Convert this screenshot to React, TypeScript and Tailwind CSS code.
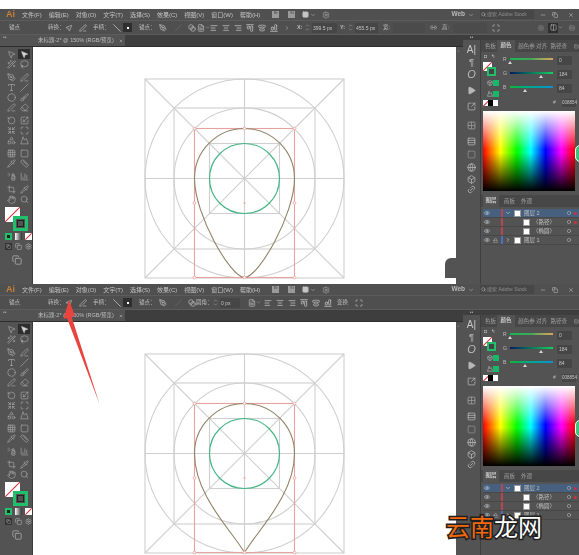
import React from "react";
import {
  Play, Link2, Box, Globe, Rows3, Square, SquareArrowOutUpRight, Grid2x2, Eye, Lock, ChevronDown, ChevronRight, Circle,
  MousePointer2, Wand2, Lasso, PenTool, PenLine, Type, Slash, Brush, Eraser, RotateCcw, Scaling, Shrink, Maximize, Shapes, Mountain, Grid3x3, Blend, Pipette, Ruler, SprayCan, ChartColumn, Crop, Hand, Search, Copy, Minus, X, AlignLeft, AlignCenter, AlignRight, AlignStartVertical, AlignCenterVertical, AlignEndVertical, FileText, Settings, Columns2,
} from "lucide-react";

const ink = "text-[#bdbdbd]";

function Spin({ v, cls }: { v: string; cls: string }) {
  return (
    <div className={`flex items-center ${cls}`}>
      <div className="flex flex-col text-[#bdbdbd] w-[5px] mr-[2px]">
        <ChevronDown size={5} strokeWidth={2} className="rotate-180 -mb-[1px]" />
        <ChevronDown size={5} strokeWidth={2} />
      </div>
      <div className="flex-1 h-[10px] bg-[#464646] text-[5px] leading-[10px] pl-[1px] text-[#c4c4c4] overflow-hidden whitespace-nowrap">{v}</div>
    </div>
  );
}

function MenuBar() {
  const items = ["文件(F)", "编辑(E)", "对象(O)", "文字(T)", "选择(S)", "效果(C)", "视图(V)", "窗口(W)", "帮助(H)"];
  return (
    <div className="h-[11px] bg-[#505050] flex items-center text-[6px] leading-none text-[#c4c4c4] whitespace-nowrap">
      <span className="ml-[6px] w-[16px] text-[9px] font-bold text-[#c8803a]">Ai</span>
      <div className="flex gap-[7px]">
        {items.map((t) => (
          <span key={t}>{t}</span>
        ))}
      </div>
      <div className="ml-[12px] w-[7px] h-[7px] bg-[#9a9a9a] text-[4px] text-[#444] text-center">Br</div>
      <div className="ml-[9px] w-[7px] h-[7px] bg-[#9a9a9a] text-[4px] text-[#444] text-center">St</div>
      <Grid2x2 size={7} className="ml-[7px] text-[#c5c5c5]" fill="#c5c5c5" />
      <ChevronDown size={6} className="ml-[1px] text-[#bbb]" />
      <Settings size={8} className="ml-[6px] text-[#a5a5a5]" />
      <div className="flex-1" />
      <span className="font-bold text-[6.5px] text-[#b8b8b8]">Web</span>
      <ChevronDown size={6} className="ml-[3px] text-[#bbb]" />
      <div className="ml-[6px] w-[54px] h-[9px] bg-[#474747] text-[5px] leading-[9px] pl-[1px] text-[#8f8f8f]">
        <Search size={5} className="inline text-[#ccc] mr-[1px]" />搜索 Adobe Stock
      </div>
      <Minus size={6} className="ml-[6px] text-[#c5c5c5]" />
      <Copy size={6} className="ml-[6px] text-[#c5c5c5]" />
      <X size={6} className="ml-[10px] mr-[5px] text-[#c5c5c5]" />
    </div>
  );
}

function AlignSet() {
  return (
    <>
      <AlignLeft size={8} strokeWidth={2.4} />
      <AlignCenter size={8} strokeWidth={2.4} />
      <AlignRight size={8} strokeWidth={2.4} />
      <AlignStartVertical size={8} strokeWidth={2.4} className="rotate-90" />
      <AlignCenterVertical size={8} strokeWidth={2.4} />
      <AlignEndVertical size={8} strokeWidth={2.4} className="rotate-90" />
    </>
  );
}

function CommonLeft() {
  return (
    <>
      <span className="ml-[9px] w-[39px]">锚点</span>
      <span className="w-[16px]">转换：</span>
      <MousePointer2 size={8} className="ml-[1px] -scale-x-100" />
      <PenLine size={8} className="ml-[6px]" />
      <span className="ml-[6px] w-[17px]">手柄：</span>
      <Slash size={8} className="ml-[3px] -scale-x-100" strokeWidth={2.4} />
      <div className="ml-[2px] w-[9px] h-[9px] bg-[#2f2f2f] flex items-center justify-center">
        <div className="w-[2px] h-[2px] bg-white" />
      </div>
      <span className="ml-[7px] w-[15px]">锚点：</span>
      <PenTool size={8} className="ml-[5px]" />
      <Slash size={7} className="ml-[8px] opacity-30" />
      <Blend size={8} className="ml-[6px]" />
    </>
  );
}

function OptionsTop() {
  return (
    <div className={`h-[15px] bg-[#4f4f4f] border-y border-[#5c5c5c] flex items-center text-[5.5px] leading-none whitespace-nowrap ${ink}`}>
      <CommonLeft />
      <FileText size={8} className="ml-[1px]" />
      <ChevronDown size={5} />
      <div className="flex gap-[4px] items-center"><AlignSet /></div>
      <ChevronRight size={6} className="ml-[6px]" />
      <span className="ml-[7px] w-[5px] font-bold">X:</span>
      <Spin v="399.5 px" cls="ml-[3px] w-[32px]" />
      <span className="ml-[3px] w-[5px] font-bold">Y:</span>
      <Spin v="455.5 px" cls="ml-[3px] w-[30px]" />
      <span className="ml-[5px] w-[9px]">宽:</span>
      <div className="ml-[1px] w-[32px] h-[10px] bg-[#4b4b4b]" />
      <Link2 size={7} className="ml-[5px]" />
      <span className="ml-[5px] w-[8px]">高:</span>
      <div className="ml-[3px] w-[34px] h-[10px] bg-[#4b4b4b]" />
      <Maximize size={8} className="ml-[5px]" />
      <Grid3x3 size={6} className="ml-[38px] opacity-40" />
      <div className="ml-[4px] w-[10px] h-[10px] bg-[#2f2f2f] flex items-center justify-center">
        <Columns2 size={7} />
      </div>
      <ChevronDown size={5} />
      <Rows3 size={6} className="ml-[6px] opacity-60" />
    </div>
  );
}

function OptionsBottom() {
  return (
    <div className={`h-[15px] bg-[#4f4f4f] border-y border-[#5c5c5c] flex items-center text-[5.5px] leading-none whitespace-nowrap ${ink}`}>
      <CommonLeft />
      <span className="w-[17px]">圆角：</span>
      <Spin v="0 px" cls="w-[27px]" />
      <FileText size={8} className="ml-[8px]" />
      <ChevronDown size={5} className="mr-[3px]" />
      <div className="flex gap-[4px] items-center"><AlignSet /></div>
      <span className="ml-[5px] w-[11px]">变换</span>
      <Maximize size={8} className="ml-[7px]" />
    </div>
  );
}

function TabBar() {
  return (
    <div className="h-[12px] bg-[#3e3e3e] flex text-[5.5px] leading-[11px] text-[#bdbdbd] border-b border-[#2e2e2e] whitespace-nowrap">
      <div className="w-[33px] bg-[#535353] text-[#aaa] pl-[3px] leading-[5px] text-[5px]">••</div>
      <div className="w-[92px] bg-[#535353] pl-[5px] flex items-center">
        未标题-2* @ 150% (RGB/预览)
        <X size={4} className="ml-[5px]" strokeWidth={3} />
      </div>
    </div>
  );
}

function Tool({ I, fill, dark }: { I: React.ComponentType<any>; fill?: boolean; dark?: boolean }) {
  return (
    <div className={`w-[12px] h-[10px] flex items-center justify-center ${dark ? "bg-[#2e2e2e]" : ""}`}>
      <I size={9} strokeWidth={1.5} className="text-[#b4b4b4]" fill={fill ? "#d8d8d8" : "none"} />
    </div>
  );
}

function Toolbox() {
  const groups: [React.ComponentType<any>, React.ComponentType<any>][][] = [
    [[MousePointer2, MousePointer2], [Wand2, Lasso]],
    [[PenTool, PenLine], [Type, Slash], [Circle, Brush], [PenLine, Eraser]],
    [[RotateCcw, Scaling], [Shrink, Maximize], [Shapes, Mountain]],
    [[Grid3x3, Square], [Pipette, Ruler]],
    [[SprayCan, ChartColumn]],
    [[Crop, Pipette], [Hand, Search]],
  ];
  return (
    <div className="w-[33px] h-full bg-[#535353] border-r border-[#3a3a3a] pl-[5px] pt-[2px] shrink-0">
      {groups.map((g, i) => (
        <div key={i} className="mb-[3px]">
          {g.map(([A, B], j) => (
            <div key={j} className="flex gap-[1px]">
              <Tool I={A} />
              <Tool I={B} fill={i === 0 && j === 0} dark={i === 0 && j === 0} />
            </div>
          ))}
        </div>
      ))}
      <div className="relative h-[25px] mt-[1px]">
        <div className="absolute left-0 top-0 w-[15px] h-[15px] bg-white overflow-hidden">
          <div className="absolute left-[-3px] top-[7px] w-[21px] h-[1px] bg-[#d8303a] -rotate-45" />
        </div>
        <div className="absolute left-[8px] top-[9px] w-[15px] h-[15px] border-[3px] border-[#1fbf6c] bg-[#535353] flex items-center justify-center">
          <div className="w-[7px] h-[7px] border border-[#222]" />
        </div>
      </div>
      <div className="flex gap-[3px] mt-[1px]">
        <div className="w-[7px] h-[7px] border-2 border-[#1fbf6c] bg-[#222]" />
        <div className="w-[7px] h-[7px] bg-gradient-to-r from-white to-[#333]" />
        <div className="w-[7px] h-[7px] bg-white relative overflow-hidden">
          <div className="absolute left-[-1px] top-[3px] w-[9px] h-[1px] bg-[#d8303a] -rotate-45" />
        </div>
      </div>
      <div className="flex gap-[3px] mt-[3px] text-[#b4b4b4]">
        <div className="w-[7px] h-[7px] bg-[#333] flex items-center justify-center"><Copy size={5} /></div>
        <Copy size={7} />
        <Settings size={7} />
      </div>
      <Copy size={10} className="ml-[7px] mt-[5px] text-[#aaa]" />
    </div>
  );
}

function CanvasArt({ pointed }: { pointed?: boolean }) {
  const cx = 211.5;
  const cy = 131.5;
  const bottom = cy + 99;
  const lower = pointed
    ? `C${cx + 50},${cy + 42} ${cx + 12},${cy + 78} ${cx},${bottom}C${cx - 12},${cy + 78} ${cx - 50},${cy + 42} ${cx - 50},${cy}`
    : `C${cx + 50},${cy + 36} ${cx + 14},${bottom} ${cx},${bottom}C${cx - 14},${bottom} ${cx - 50},${cy + 36} ${cx - 50},${cy}`;
  const handles: [number, number][] = [
    [cx - 50, cy - 50], [cx, cy - 50], [cx + 50, cy - 50],
    [cx - 50, cy + 24.5], [cx + 50, cy + 24.5],
    [cx - 50, bottom], [cx, bottom], [cx + 50, bottom],
  ];
  return (
    <svg width="423" height="237" viewBox="0 0 423 237" className="block" fill="none">
      <g stroke="#cfcfcf" strokeWidth="1.1">
        <rect x={cx - 99.5} y={cy - 99.5} width="199" height="199" />
        <rect x={cx - 70.5} y={cy - 70.5} width="141" height="141" />
        <rect x={cx - 35} y={cy - 35} width="70" height="70" />
        <circle cx={cx} cy={cy} r="99.5" />
        <circle cx={cx} cy={cy} r="70.5" />
        <path d={`M${cx - 99.5},${cy - 99.5}L${cx + 99.5},${cy + 99.5}M${cx + 99.5},${cy - 99.5}L${cx - 99.5},${cy + 99.5}M${cx - 99.5},${cy}H${cx + 99.5}M${cx},${cy - 99.5}V${cy + 99.5}`} />
      </g>
      <circle cx={cx} cy={cy} r="35" stroke="#43b583" strokeWidth="1.2" />
      <rect x={cx - 50} y={cy - 50} width="100" height="149" stroke="#e9a0a0" strokeWidth="1.1" />
      <path d={`M${cx - 50},${cy}A50,50 0 0 1 ${cx + 50},${cy}${lower}`} stroke="#8f8468" strokeWidth="1.1" />
      {handles.map(([x, y]) => (
        <circle key={`${x}-${y}`} cx={x} cy={y} r="1.4" fill="#fff" stroke="#ee9a9a" strokeWidth="0.8" />
      ))}
      <circle cx={cx} cy={cy + 24.5} r="1" fill="#f0a5a5" />
    </svg>
  );
}

function DockIcons() {
  const s = "text-[#b8b8b8]";
  return (
    <div className="w-[18px] shrink-0 border-r border-[#3f3f3f] bg-[#535353] flex flex-col items-center">
      <div className="w-full h-[5px] bg-[#3e3e3e] text-[#aaa] text-[5px] leading-[4px] text-center">••</div>
      <span className="mt-[4px] text-[10px] leading-[12px] text-[#c8c8c8]">A|</span>
      <span className="text-[9px] leading-[12px] text-[#aaa] font-bold">¶</span>
      <span className="text-[11px] leading-[12px] text-[#bbb] italic">O</span>
      <Play size={9} fill="#b8b8b8" className={`${s} mt-[6px]`} />
      <SquareArrowOutUpRight size={9} className={`${s} mt-[7px]`} />
      <Grid2x2 size={9} className={`${s} mt-[10px] opacity-70`} strokeDasharray="2 1" />
      <Rows3 size={9} className={`${s} mt-[7px]`} />
      <Square size={9} className={`${s} mt-[4px] opacity-60`} />
      <Globe size={9} className={`${s} mt-[4px]`} />
      <Box size={9} className={`${s} mt-[3px]`} />
      <Link2 size={9} className={`${s} mt-[1px] -rotate-45`} />
    </div>
  );
}

function Slider({ label, v, track, thumb }: { label: string; v: string; track: string; thumb: string }) {
  return (
    <div className="flex items-center h-[14px] text-[5px] text-[#bdbdbd]">
      <span className="ml-[22px] w-[7px]">{label}</span>
      <div className="relative w-[43px] h-[8px]">
        <div className={`absolute left-0 right-0 top-[2px] h-[2px] ${track}`} />
        <div className={`absolute top-[5px] w-0 h-0 border-x-[2.5px] border-x-transparent border-b-[3px] border-b-[#d6d6d6] ${thumb}`} />
      </div>
      <div className="ml-[4px] w-[15px] h-[9px] bg-[#464646] leading-[9px] pl-[2px] text-[#c4c4c4]">{v}</div>
    </div>
  );
}

function LayerRow({ sel, lock, chev, thumbMl, name, dot, blue }: { sel?: boolean; lock?: boolean; chev?: "down" | "right"; thumbMl: string; name: string; dot?: boolean; blue?: boolean }) {
  return (
    <div className={`relative h-[9px] flex items-center text-[5.5px] text-[#c0c0c0] border-b border-[#484848] whitespace-nowrap ${sel ? "bg-[#46607e]" : ""}`}>
      <Eye size={6} className="ml-[1px] text-[#c8d4dc]" />
      <div className="w-[9px] ml-[1px] pl-[2px]">{lock && <Lock size={5} />}</div>
      <div className={`w-[2px] h-full ml-[1px] ${blue ? "bg-[#4c6fc4]" : "bg-[#b8454f]"}`} />
      <div className="w-[9px] ml-[2px]">
        {chev === "down" && <ChevronDown size={6} strokeWidth={3} />}
        {chev === "right" && <ChevronRight size={6} strokeWidth={3} />}
      </div>
      <div className={`w-[7px] h-[7px] bg-white border border-[#999] shrink-0 ${thumbMl}`} />
      <span className="ml-[3px]">{name}</span>
      <div className="flex-1" />
      <Circle size={4} strokeWidth={3} className="text-[#c0c0c0]" />
      <div className={`ml-[3px] mr-[2px] w-[3px] h-[3px] rounded-full ${dot ? "bg-[#d62f3c]" : ""}`} />
    </div>
  );
}

function Panels() {
  return (
    <div className="flex-1 bg-[#535353] min-w-0 relative overflow-hidden">
      <div className="h-[5px] bg-[#3e3e3e]" />
      <div className="h-[12px] bg-[#474747] flex items-end text-[5.5px] leading-[11px] text-[#a0a0a0] whitespace-nowrap">
        <span className="ml-[4px] w-[12px]">色板</span>
        <span className="w-[19px] h-[12px] bg-[#535353] text-[#c8c8c8] text-center font-bold">颜色</span>
        <span className="ml-[3px] w-[18px]">颜色参</span>
        <span className="w-[15px]">对齐</span>
        <span className="w-[20px]">路径查</span>
        <Rows3 size={5} className="ml-[4px] mb-[3px]" />
      </div>
      <div className="relative h-[46px] pt-[1px]">
        <Slider label="R" v="0" track="bg-gradient-to-r from-[#14b552] via-[#3fa85a] to-[#d8a25a]" thumb="left-[-2px]" />
        <Slider label="G" v="184" track="bg-gradient-to-r from-[#0a1860] via-[#0a7a5a] to-[#14d060]" thumb="left-[29px]" />
        <Slider label="B" v="84" track="bg-gradient-to-r from-[#14b830] to-[#1490d0]" thumb="left-[13px]" />
        <div className="absolute left-[2px] top-[2px] w-[19px] h-[44px]">
          <div className="flex gap-[4px] text-[#ccc] text-[5px] leading-[5px] ml-[1px]"><span>◘</span><span>↰</span></div>
          <div className="relative h-[14px] mt-[3px]">
            <div className="absolute left-0 top-0 w-[9px] h-[9px] bg-white overflow-hidden">
              <div className="absolute -left-[2px] top-[4px] w-[13px] h-[1px] bg-[#d8303a] -rotate-45" />
            </div>
            <div className="absolute left-[4px] top-[5px] w-[9px] h-[9px] border-2 border-[#1fbf6c] bg-[#444]" />
          </div>
          <div className="flex items-center mt-[4px] ml-[4px]"><Box size={6} className="text-[#ccc]" /><div className="w-[6px] h-[6px] bg-[#17b86a]" /></div>
          <div className="flex items-center mt-[5px] ml-[4px]"><Mountain size={6} className="text-[#ccc]" /><div className="w-[6px] h-[6px] bg-[#17b86a]" /></div>
        </div>
      </div>
      <div className="flex items-center h-[10px] pl-[2px]">
        <div className="w-[5px] h-[6px] bg-white relative overflow-hidden"><div className="absolute -left-[1px] top-[3px] w-[8px] h-[1px] bg-[#d8303a] -rotate-45" /></div>
        <div className="w-[5px] h-[6px] bg-black" />
        <div className="w-[5px] h-[6px] bg-white" />
        <span className="ml-[55px] w-[3px] text-[5px] text-[#bbb]">#</span>
        <div className="ml-[6px] w-[14px] h-[8px] bg-[#464646] text-[4.5px] leading-[8px] text-center text-[#c6c6c6]">008854</div>
      </div>
      <div className="relative ml-[2px] mr-[4px] mt-[3px] h-[80px] overflow-hidden bg-[linear-gradient(to_right,#ff0000,#ffff00_19%,#00ff00_37%,#00ffff_52%,#0000ff_68%,#ff00ff_85%,#ff0000)]">
        <div className="absolute inset-0 bg-[linear-gradient(to_bottom,#ffffff_0%,rgba(255,255,255,0)_48%,rgba(0,0,0,0)_52%,#000000_100%)]" />
      </div>
      <div className="absolute right-[-6px] top-[110px] w-[10px] h-[17px] rounded-full bg-[#3fc27f] border border-white" />
      <div className="h-[12px] mt-[4px] bg-[#474747] flex items-end text-[5.5px] leading-[11px] text-[#a0a0a0]">
        <span className="w-[16px] h-[12px] bg-[#535353] text-[#c8c8c8] text-center font-bold ml-[2px]">图层</span>
        <span className="ml-[5px] w-[17px]">画板</span>
        <span className="w-[14px]">外观</span>
      </div>
      <div className="ml-[2px] mt-[2px]">
        <LayerRow sel chev="down" thumbMl="ml-0" name="图层 2" dot />
        <LayerRow thumbMl="ml-[9px]" name="〈路径〉" dot />
        <LayerRow thumbMl="ml-[9px]" name="〈椭圆〉" />
        <LayerRow lock chev="right" blue thumbMl="ml-0" name="图层 1" />
      </div>
    </div>
  );
}

function AiWindow({ variant, cls }: { variant: "top" | "bottom"; cls: string }) {
  return (
    <div className={`flex flex-col overflow-hidden bg-[#535353] ${cls}`}>
      <MenuBar />
      {variant === "top" ? <OptionsTop /> : <OptionsBottom />}
      <div className="flex flex-1 min-h-0">
        <div className="w-[463px] shrink-0 flex flex-col">
          <TabBar />
          <div className="flex flex-1 min-h-0">
            <Toolbox />
            <div className="w-[423px] shrink-0 bg-white overflow-hidden">
              <CanvasArt pointed={variant === "bottom"} />
            </div>
            <div className="w-[7px] shrink-0 bg-[#535353] flex justify-center pt-[3px]">
              <div className="w-[4px] h-[4px] text-[#9a9a9a] text-[4px] leading-none">^</div>
            </div>
          </div>
        </div>
        <DockIcons />
        <Panels />
      </div>
    </div>
  );
}

export default function App() {
  return (
    <div className="relative w-[579px] h-[555px] overflow-hidden bg-white font-['Liberation_Sans','Noto_Sans_CJK_SC',sans-serif]">
      <div className="blur-[0.35px]">
        <div className="h-[9px] bg-white" />
        <AiWindow variant="top" cls="h-[275px]" />
        <AiWindow variant="bottom" cls="h-[271px]" />
      </div>
      <div className="absolute left-[445px] top-[258px] w-[11px] h-[20px] bg-[#535353] rounded-tl-[6px]" />
      <svg className="absolute left-0 top-0" width="579" height="555" viewBox="0 0 579 555">
        <polygon points="69,300 75,316 71.5,316.5 99.5,404 67,318 63.5,319" fill="#e8433f" />
      </svg>
      <div className="absolute left-[446px] top-[511px] text-[24px] leading-[30px] font-['Noto_Sans_CJK_SC',sans-serif] font-normal whitespace-nowrap [-webkit-text-stroke:3px_#1f1f1f] [paint-order:stroke_fill]">
        <span className="text-[#f2690d]">云南</span>
        <span className="text-white">龙网</span>
      </div>
    </div>
  );
}
